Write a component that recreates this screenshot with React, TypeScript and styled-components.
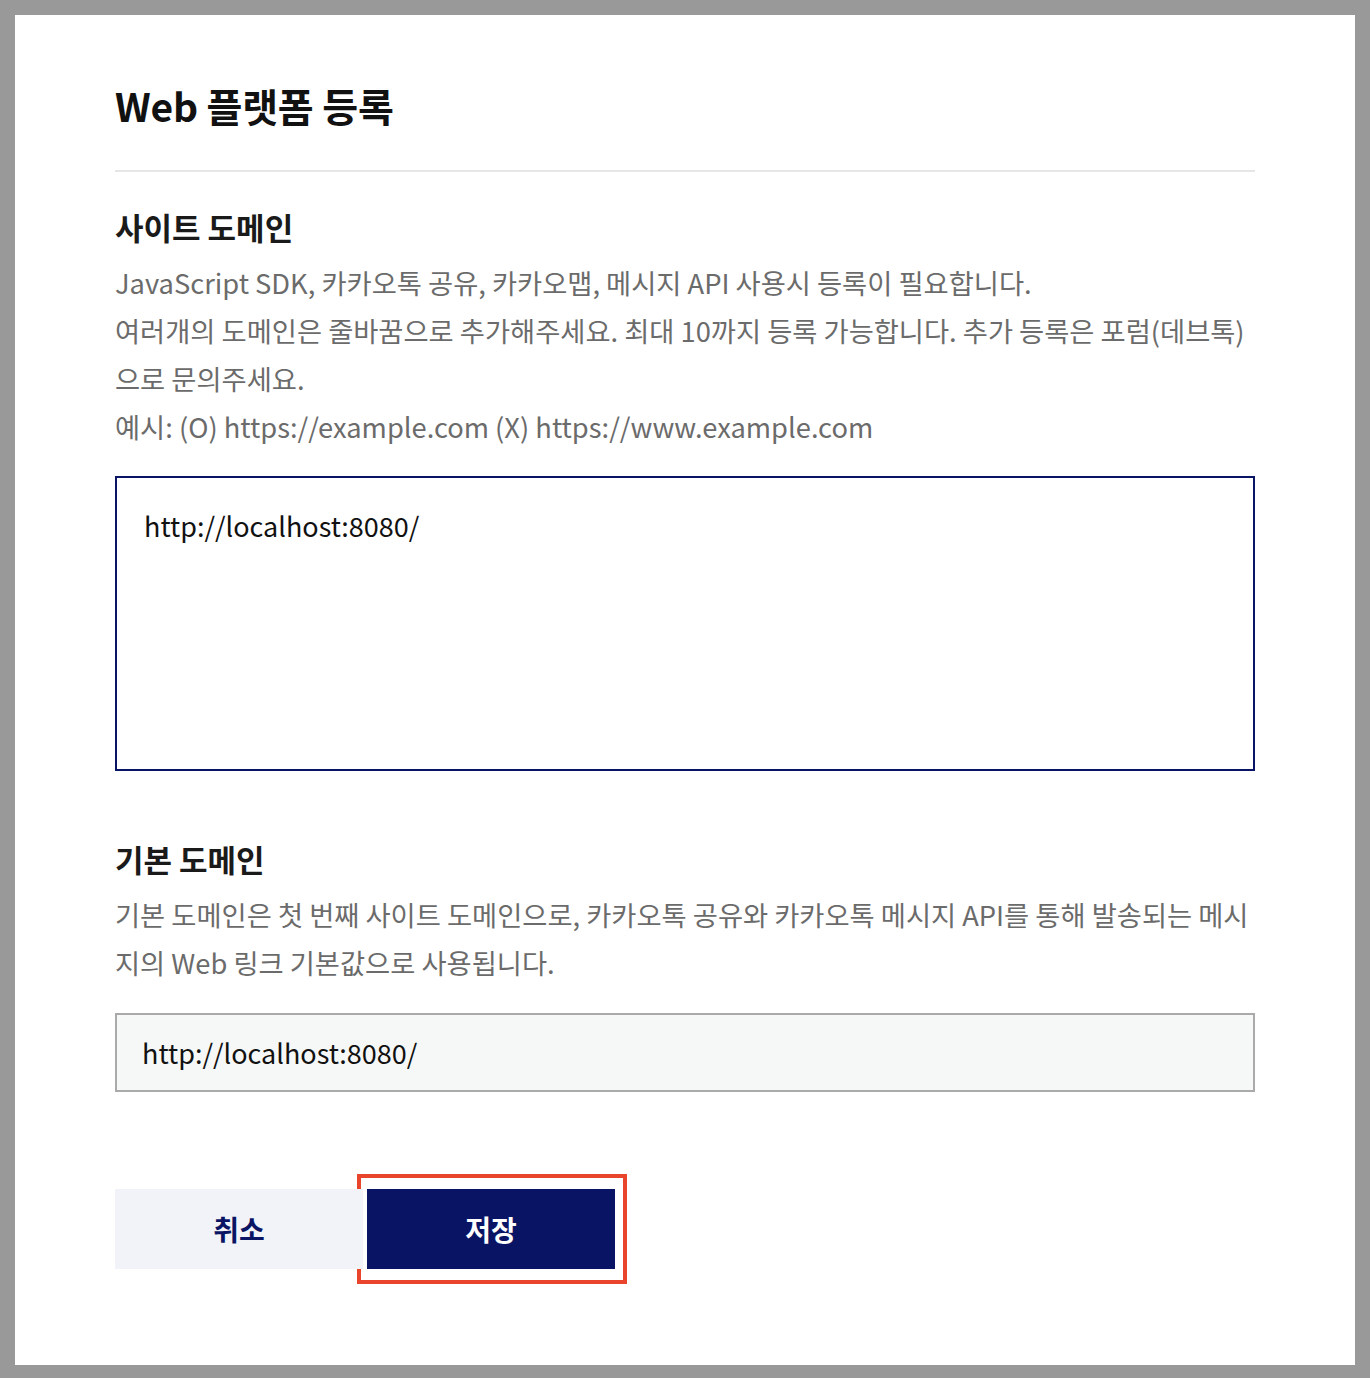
import React from "react";
import styled, { createGlobalStyle } from "styled-components";

const Global = createGlobalStyle`
  html, body { margin: 0; padding: 0; background: #999999; }
  body { font-family: "Noto Sans CJK KR", "Noto Sans", sans-serif; }
  * { box-sizing: border-box; }
`;

const Backdrop = styled.div`
  background: #999999;
  padding: 15px 15px 13px;
  min-height: 1378px;
`;

const Modal = styled.div`
  background: #ffffff;
  padding: 65px 100px 96px;
`;

const Header = styled.div`
  border-bottom: 2px solid #e6e6e6;
  padding-bottom: 40px;
`;

const Title = styled.h1`
  margin: 0;
  font-size: 39px;
  line-height: 50px;
  font-weight: 700;
  color: #111111;
  letter-spacing: -0.2px;
`;

const Section = styled.section<{ $top: number }>`
  margin-top: ${(p) => p.$top}px;
`;

const SectionTitle = styled.h2`
  margin: 0 0 11px;
  font-size: 31px;
  line-height: 40px;
  font-weight: 700;
  color: #1a1a1a;
`;

const Desc = styled.p`
  margin: 0;
  font-size: 27.3px;
  line-height: 48px;
  font-weight: 400;
  color: #6b6b6b;
`;

const TextArea = styled.textarea`
  display: block;
  width: 100%;
  height: 295px;
  margin-top: 26px;
  border: 2px solid #0a1464;
  padding: 28px 27px;
  font-family: "Noto Sans CJK KR", "Noto Sans", sans-serif;
  font-size: 27px;
  line-height: 40px;
  color: #111111;
  resize: none;
  outline: none;
  background: #ffffff;
`;

const Input = styled.input`
  display: block;
  width: 100%;
  height: 79px;
  margin-top: 27px;
  border: 2px solid #aaaaaa;
  background: #f6f8f7;
  padding: 0 25px;
  font-family: "Noto Sans CJK KR", "Noto Sans", sans-serif;
  font-size: 27px;
  color: #111111;
  outline: none;
`;

const Actions = styled.div`
  display: flex;
  gap: 4px;
  margin-top: 97px;
`;

const Button = styled.button<{ $primary?: boolean }>`
  position: relative;
  z-index: 1;
  width: 248px;
  height: 80px;
  border: none;
  font-family: "Noto Sans CJK KR", "Noto Sans", sans-serif;
  font-size: 28px;
  font-weight: 700;
  cursor: pointer;
  background: ${(p) => (p.$primary ? "#0a1464" : "#f2f3f8")};
  color: ${(p) => (p.$primary ? "#ffffff" : "#0a1464")};
`;

const Highlight = styled.div`
  position: relative;
  &::before {
    content: "";
    position: absolute;
    top: -15px;
    left: -10px;
    right: -12px;
    bottom: -15px;
    background: #ffffff;
    border: 4px solid #e8452c;
  }
`;

export default function App() {
  return (
    <>
      <Global />
      <Backdrop>
        <Modal>
          <Header>
            <Title>Web 플랫폼 등록</Title>
          </Header>
          <Section $top={35}>
            <SectionTitle>사이트 도메인</SectionTitle>
            <Desc>
              JavaScript SDK, 카카오톡 공유, 카카오맵, 메시지 API 사용시 등록이 필요합니다.
              <br />
              여러개의 도메인은 줄바꿈으로 추가해주세요. 최대 10까지 등록 가능합니다. 추가 등록은 포럼(데브톡)으로 문의주세요.
              <br />
              예시: (O) https://example.com (X) https://www.example.com
            </Desc>
            <TextArea defaultValue={"http://localhost:8080/"} />
          </Section>
          <Section $top={68}>
            <SectionTitle>기본 도메인</SectionTitle>
            <Desc>
              기본 도메인은 첫 번째 사이트 도메인으로, 카카오톡 공유와 카카오톡 메시지 API를 통해 발송되는 메시지의 Web 링크 기본값으로 사용됩니다.
            </Desc>
            <Input defaultValue="http://localhost:8080/" readOnly />
          </Section>
          <Actions>
            <Button>취소</Button>
            <Highlight>
              <Button $primary>저장</Button>
            </Highlight>
          </Actions>
        </Modal>
      </Backdrop>
    </>
  );
}
